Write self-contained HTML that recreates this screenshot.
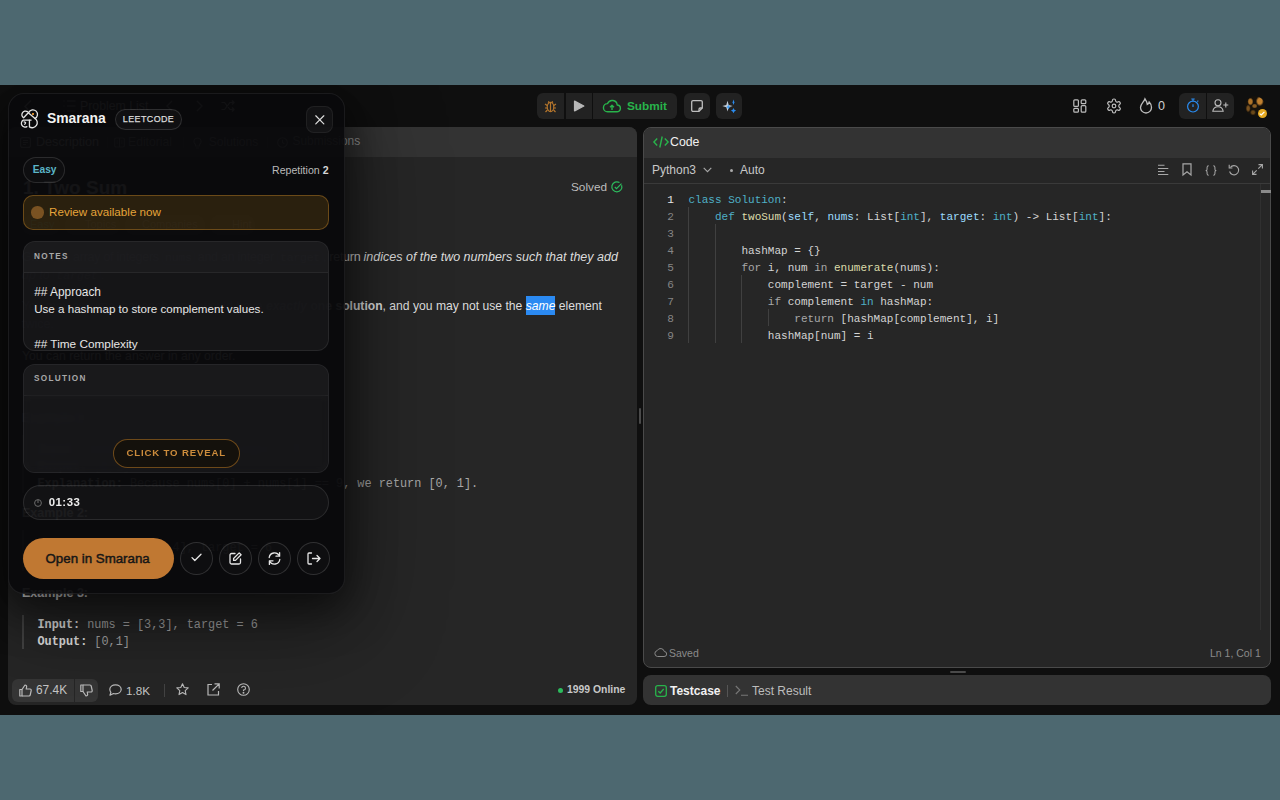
<!DOCTYPE html>
<html><head><meta charset="utf-8">
<style>
*{box-sizing:border-box;margin:0;padding:0}
html,body{width:1280px;height:800px;overflow:hidden}
body{background:#4d6870;font-family:"Liberation Sans",sans-serif;position:relative;color:#eee}
.a{position:absolute}
.mono{font-family:"Liberation Mono",monospace}
#app{position:absolute;left:0;top:85px;width:1280px;height:630px;background:#0f0f0f}
.btn{position:absolute;background:#222;border-radius:6px}
.panel{position:absolute;border-radius:8px;overflow:hidden}
svg{position:absolute;overflow:visible}
.t{position:absolute;white-space:nowrap;line-height:1}
.ic{font-size:11.5px;background:rgba(255,255,255,0.08);border:1px solid rgba(255,255,255,0.1);border-radius:4px;padding:0 2px}
.k{color:#4fb0c6}.f{color:#dcdcaa}.v{color:#9cdcfe}.g{color:#a8a8a8}
</style></head><body>
<div id="root" style="position:absolute;left:0;top:0;width:1280px;height:800px;clip-path:inset(85px 0 85px 0)">
<div id="app"></div>

<!-- ===== TOP BAR ===== -->
<div id="topbar">
  <!-- center group -->
  <div class="btn" style="left:537px;top:93px;width:140px;height:26px"></div>
  <div class="a" style="left:564px;top:93px;width:2px;height:26px;background:#0f0f0f"></div>
  <div class="a" style="left:592px;top:93px;width:1px;height:26px;background:#0f0f0f"></div>
  <!-- bug -->
  <svg style="left:544px;top:99px" width="13" height="14" viewBox="0 0 13 14" fill="none" stroke="#b5762c" stroke-width="1.2">
    <ellipse cx="6.5" cy="8" rx="3.3" ry="4.6"/><path d="M6.5 3.6V12.5M4.2 3.8L5 2.3M8.8 3.8L8 2.3M3.2 6.5L1 5M9.8 6.5L12 5M3.2 9L1 9M9.8 9L12 9M3.4 11L1.5 13M9.6 11L11.5 13"/>
  </svg>
  <!-- play -->
  <svg style="left:573px;top:100px" width="12" height="12" viewBox="0 0 12 12"><path d="M1.6 1.2L10.8 6L1.6 10.8Z" fill="#b8b8b8" stroke="#b8b8b8" stroke-width="1.4" stroke-linejoin="round"/></svg>
  <!-- cloud -->
  <svg style="left:603px;top:99px" width="18" height="14" viewBox="0 0 18 14" fill="none" stroke="#28b44b" stroke-width="1.4" stroke-linejoin="round">
    <path d="M4.5 12.8H13.8A3.4 3.4 0 0 0 14.2 6 5 5 0 0 0 4.6 4.6 4.1 4.1 0 0 0 4.5 12.8Z"/><path d="M9 11V6.3M7 8.2L9 6.2 11 8.2"/>
  </svg>
  <div class="t" style="left:627px;top:100.5px;font-size:11.8px;font-weight:bold;color:#28b44b">Submit</div>
  <!-- note -->
  <div class="btn" style="left:684px;top:93px;width:26px;height:26px"></div>
  <svg style="left:691px;top:100px" width="12" height="12" viewBox="0 0 12 12" fill="none" stroke="#bdbdbd" stroke-width="1.3"><path d="M2 0.7H10A1.3 1.3 0 0 1 11.3 2V8L8 11.3H2A1.3 1.3 0 0 1 0.7 10V2A1.3 1.3 0 0 1 2 0.7Z"/><path d="M11.3 8H9.3A1.3 1.3 0 0 0 8 9.3V11.3"/></svg>
  <!-- ai -->
  <div class="btn" style="left:716px;top:93px;width:26px;height:26px"></div>
  <svg style="left:720px;top:98px" width="16" height="16" viewBox="0 0 16 16">
    <path d="M7.5 2.8L8.7 6.9 12.7 8.1 8.7 9.3 7.5 13.4 6.3 9.3 2.3 8.1 6.3 6.9Z" fill="#c4ccd6"/>
    <path d="M8.3 6.6L9.1 8.3 10.6 9.1 9.1 9.7 8.3 11.6 7.6 9.7 6.2 9.1 7.6 8.3Z" fill="#3d9cf5"/>
    <path d="M13.5 1.5L14.3 4 15 4.3 14.3 4.6 13.5 6.9 12.7 4.6 12 4.3 12.7 4Z" fill="#2a8cf0"/>
    <path d="M13.5 10L14.4 11.8 16.1 12.6 14.4 13.4 13.5 15.2 12.6 13.4 10.9 12.6 12.6 11.8Z" fill="#2a8cf0"/>
  </svg>

  <!-- right icons -->
  <svg style="left:1073px;top:99px" width="14" height="14" viewBox="0 0 14 14" fill="none" stroke="#bdbdbd" stroke-width="1.2">
    <rect x="0.8" y="0.8" width="4.6" height="6.6" rx="1"/><rect x="0.8" y="9.3" width="4.6" height="3.9" rx="1"/><rect x="8.2" y="0.8" width="4.6" height="3.9" rx="1"/><rect x="8.2" y="6.6" width="4.6" height="6.6" rx="1"/>
  </svg>
  <svg style="left:1107px;top:99px" width="14" height="14" viewBox="2 2 20 20" fill="none" stroke="#bdbdbd" stroke-width="1.7"><path d="M12.22 2h-.44a2 2 0 0 0-2 2v.18a2 2 0 0 1-1 1.73l-.43.25a2 2 0 0 1-2 0l-.15-.08a2 2 0 0 0-2.73.73l-.22.38a2 2 0 0 0 .73 2.730l.15.1a2 2 0 0 1 1 1.72v.51a2 2 0 0 1-1 1.74l-.15.09a2 2 0 0 0-.73 2.73l.22.38a2 2 0 0 0 2.73.73l.15-.08a2 2 0 0 1 2 0l.43.25a2 2 0 0 1 1 1.73V20a2 2 0 0 0 2 2h.44a2 2 0 0 0 2-2v-.18a2 2 0 0 1 1-1.73l.43-.25a2 2 0 0 1 2 0l.15.08a2 2 0 0 0 2.73-.73l.22-.39a2 2 0 0 0-.73-2.73l-.15-.08a2 2 0 0 1-1-1.74v-.5a2 2 0 0 1 1-1.74l.15-.09a2 2 0 0 0 .73-2.73l-.22-.38a2 2 0 0 0-2.73-.73l-.15.08a2 2 0 0 1-2 0l-.43-.25a2 2 0 0 1-1-1.73V4a2 2 0 0 0-2-2z"/><circle cx="12" cy="12" r="2.6"/></svg>
  <svg style="left:1139px;top:98px" width="14" height="16" viewBox="0 0 14 16" fill="none" stroke="#bdbdbd" stroke-width="1.3"><path d="M7 15A5.5 5.5 0 0 1 1.5 9.5C1.5 6 5 4 6 0.8 7.5 3 8.3 4.8 8.3 6.5 9.3 6 10 5 10.2 4 11.8 5.5 12.5 7.5 12.5 9.5A5.5 5.5 0 0 1 7 15Z"/></svg>
  <div class="t" style="left:1158px;top:100px;font-size:12.5px;color:#cfcfcf">0</div>
  <div class="btn" style="left:1179px;top:93px;width:55px;height:26px"></div>
  <div class="a" style="left:1206px;top:93px;width:1px;height:26px;background:#0f0f0f"></div>
  <svg style="left:1186px;top:98px" width="14" height="15" viewBox="0 0 14 15" fill="none" stroke="#2a8cf0" stroke-width="1.2"><circle cx="7" cy="8.6" r="5.4"/><path d="M7 6.2V9M5.3 1H8.7M7 1V3.2M11.3 3.6L12.3 2.6"/></svg>
  <svg style="left:1212px;top:99px" width="17" height="13" viewBox="0 0 17 13" fill="none" stroke="#bdbdbd" stroke-width="1.1"><circle cx="6" cy="3.8" r="3"/><path d="M0.8 12.3C1.3 9.2 3.3 7.7 6 7.7S10.7 9.2 11.2 12.3Z"/><path d="M13.8 3.5V8.5M11.3 6H16.3"/></svg>
  <!-- avatar -->
  <div class="a" style="left:1244.5px;top:96px;width:20.5px;height:20px;border-radius:50%;background:radial-gradient(ellipse 3px 4px at 27% 28%,#b07428 55%,transparent 100%),radial-gradient(ellipse 4px 5px at 74% 26%,#c08030 55%,transparent 100%),radial-gradient(ellipse 3px 2.5px at 48% 50%,#8a5c22 50%,transparent 100%),radial-gradient(ellipse 2.5px 4px at 16% 62%,#7a5220 45%,transparent 100%),radial-gradient(ellipse 3px 3px at 40% 82%,#6a4818 45%,transparent 100%),#16110b"></div>
  <div class="a" style="left:1257.7px;top:109.2px;width:9px;height:9px;border-radius:50%;background:#e6aa22"></div><svg style="left:1259.3px;top:111.3px" width="6" height="5" viewBox="0 0 6 5" fill="none" stroke="#fff" stroke-width="1.2"><path d="M0.6 2.6L2.3 4 5.4 0.8"/></svg>
</div>

<!-- ===== LEFT PANEL ===== -->
<div class="panel" style="left:8px;top:127px;width:629px;height:578px;background:#262626">
  <div class="a" style="left:0;top:0;width:629px;height:30px;background:#333"></div>
</div>
<div id="leftc">
  <!-- topbar left (under overlay) -->
  <svg style="left:22px;top:99px" width="14" height="14" viewBox="0 0 14 14" fill="none" stroke="#bdbdbd" stroke-width="1.3"><path d="M9 1.5L3 7.5 6 10.5M4 11.5H12"/></svg>
  <svg style="left:63px;top:100px" width="13" height="12" viewBox="0 0 13 12" fill="none" stroke="#bdbdbd" stroke-width="1.2"><path d="M4 1H12.5M4 6H12.5M4 11H12.5M0.5 1H1.5M0.5 6H1.5M0.5 11H1.5"/></svg>
  <div class="t" style="left:80px;top:100px;font-size:12.3px;color:#c0c0c0">Problem List</div>
  <svg style="left:166px;top:100px" width="7" height="12" viewBox="0 0 7 12" fill="none" stroke="#9a9a9a" stroke-width="1.3"><path d="M6 1L1 6 6 11"/></svg>
  <svg style="left:196px;top:100px" width="7" height="12" viewBox="0 0 7 12" fill="none" stroke="#9a9a9a" stroke-width="1.3"><path d="M1 1L6 6 1 11"/></svg>
  <svg style="left:221px;top:100px" width="14" height="12" viewBox="0 0 14 12" fill="none" stroke="#bdbdbd" stroke-width="1.2"><path d="M0.5 2.5H3.5L9 9.5H13M0.5 9.5H3.5L9 2.5H13M11 0.5L13 2.5 11 4.5M11 7.5L13 9.5 11 11.5"/></svg>
  <!-- tabs -->
  <svg style="left:19.5px;top:137px" width="11" height="11" viewBox="0 0 11 11" fill="none" stroke="#bdbdbd" stroke-width="1.1"><rect x="0.6" y="0.6" width="9.8" height="9.8" rx="2"/><path d="M3 3.5H8M3 5.5H8M3 7.5H6"/></svg>
  <div class="t" style="left:36px;top:136px;font-size:12.6px;color:#e6e6e6">Description</div>
  <div class="a" style="left:106.5px;top:137px;width:1px;height:11px;background:#4a4a4a"></div>
  <svg style="left:114px;top:137px" width="11" height="11" viewBox="0 0 11 11" fill="none" stroke="#9a9a9a" stroke-width="1.1"><rect x="0.6" y="1" width="9.8" height="9" rx="1.5"/><path d="M5.5 1V10M2.5 4H4M2.5 6H4M7 4H8.5M7 6H8.5"/></svg>
  <div class="t" style="left:128px;top:136px;font-size:12.2px;color:#9a9a9a">Editorial</div>
  <div class="a" style="left:182.5px;top:137px;width:1px;height:11px;background:#4a4a4a"></div>
  <svg style="left:192px;top:136.5px" width="11" height="12" viewBox="0 0 11 12" fill="none" stroke="#9a9a9a" stroke-width="1.1"><path d="M5.5 1A3.5 3.5 0 0 1 7.5 7.4V9H3.5V7.4A3.5 3.5 0 0 1 5.5 1ZM4 11H7"/></svg>
  <div class="t" style="left:208.8px;top:136px;font-size:12px;color:#9a9a9a">Solutions</div>
  <div class="a" style="left:267px;top:137px;width:1px;height:11px;background:#4a4a4a"></div>
  <svg style="left:277px;top:137px" width="11" height="11" viewBox="0 0 11 11" fill="none" stroke="#9a9a9a" stroke-width="1.1"><circle cx="5.5" cy="5.5" r="4.8"/><path d="M5.5 2.8V5.5L7.3 6.8"/></svg>
  <div class="t" style="left:292.5px;top:136px;font-size:11.95px;color:#9a9a9a">Submissions</div>
  <!-- title -->
  <div class="t" style="left:23px;top:178px;font-size:19px;font-weight:bold;color:#f0f0f0">1. Two Sum</div>
  <div class="t" style="left:571px;top:182px;font-size:11.8px;color:#bdbdbd">Solved</div>
  <svg style="left:611px;top:181px" width="12" height="12" viewBox="0 0 12 12" fill="none" stroke="#2cbb5d" stroke-width="1.2"><path d="M10.6 4.3A5 5 0 1 1 8.5 1.6"/><path d="M3.8 6L5.5 7.6 10.5 2.6"/></svg>
  <!-- tags -->
  <div class="a" style="left:22px;top:215px;width:38px;height:20px;border-radius:10px;background:#3a3a3a"></div>
  <div class="t" style="left:30px;top:219px;font-size:11px;color:#5cb6c8">Easy</div>
  <div class="a" style="left:65px;top:215px;width:55px;height:20px;border-radius:10px;background:#3a3a3a"></div>
  <div class="t" style="left:85px;top:219px;font-size:11px;color:#9a9a9a">Topics</div>
  <div class="a" style="left:125px;top:215px;width:80px;height:20px;border-radius:10px;background:#3a3a3a"></div>
  <div class="t" style="left:142px;top:219px;font-size:11px;color:#9a9a9a">Companies</div>
  <div class="a" style="left:210px;top:215px;width:45px;height:20px;border-radius:10px;background:#3a3a3a"></div>
  <div class="t" style="left:232px;top:219px;font-size:11px;color:#9a9a9a">Hint</div>
  <!-- paragraphs -->
  <div class="t" id="p1" style="left:22px;top:251px;font-size:12.5px;color:#dcdcdc"><span style="letter-spacing:-0.27px">Given an array of integers <span class="mono ic">nums</span> and an integer <span class="mono ic">target</span>, return </span><i id="p1i">indices of the two numbers such that they add</i></div>
  <div class="t" style="left:22px;top:269px;font-size:12.5px;color:#dcdcdc"><i>up to <span class="mono ic">target</span></i>.</div>
  <div class="t" id="p2" style="left:22px;top:300px;font-size:12.15px;color:#dcdcdc">You may assume that each input would have <b><i>exactly</i> one solution</b>, and you may not use the <span id="same" style="background:#2b8af2;color:#fff;padding:3px 0 2px"><i>same</i></span> element</div>
  <div class="t" style="left:22px;top:318px;font-size:12.5px;color:#dcdcdc">twice.</div>
  <div class="t" style="left:22px;top:350.3px;font-size:12.25px;color:#dcdcdc">You can return the answer in any order.</div>
  <!-- examples -->
  <div class="t" style="left:22px;top:412px;font-size:12.5px;font-weight:bold;color:#f0f0f0">Example 1:</div>
  <div class="a" style="left:22px;top:435px;width:1.5px;height:58px;background:#444"></div>
  <div class="t mono" style="left:37.5px;top:444.5px;font-size:11.85px;color:#a8a8a8"><b style="color:#e6e6e6">Input:</b> nums = [2,7,11,15], target = 9</div>
  <div class="t mono" style="left:37.5px;top:461.5px;font-size:11.85px;color:#a8a8a8"><b style="color:#e6e6e6">Output:</b> [0,1]</div>
  <div class="t mono" style="left:37.5px;top:478.5px;font-size:11.85px;color:#a8a8a8"><b style="color:#e6e6e6">Explanation:</b> Because nums[0] + nums[1] == 9, we return [0, 1].</div>
  <div class="t" style="left:22px;top:507px;font-size:12.5px;font-weight:bold;color:#f0f0f0">Example 2:</div>
  <div class="a" style="left:22px;top:530px;width:1.5px;height:41px;background:#444"></div>
  <div class="t mono" style="left:37.5px;top:542.5px;font-size:11.85px;color:#a8a8a8"><b style="color:#e6e6e6">Input:</b> nums = [3,2,4], target = 6</div>
  <div class="t mono" style="left:37.5px;top:559.5px;font-size:11.85px;color:#a8a8a8"><b style="color:#e6e6e6">Output:</b> [1,2]</div>
  <div class="t" style="left:22px;top:587px;font-size:12.5px;font-weight:bold;color:#f0f0f0">Example 3:</div>
  <div class="a" style="left:22px;top:615px;width:1.5px;height:34px;background:#444"></div>
  <div class="t mono" style="left:37.5px;top:619.5px;font-size:11.85px;color:#a8a8a8"><b style="color:#e6e6e6">Input:</b> nums = [3,3], target = 6</div>
  <div class="t mono" style="left:37.5px;top:636.5px;font-size:11.85px;color:#a8a8a8"><b style="color:#e6e6e6">Output:</b> [0,1]</div>
  <!-- footer -->
  <div class="a" style="left:12px;top:679px;width:86px;height:23px;border-radius:6px;background:#363636"></div>
  <div class="a" style="left:73.5px;top:679px;width:1px;height:23px;background:#262626"></div>
  <svg style="left:19px;top:684px" width="13" height="13" viewBox="0 0 13 13" fill="none" stroke="#bdbdbd" stroke-width="1.2" stroke-linejoin="round"><path d="M0.8 5.5H3V12H0.8Z"/><path d="M3 5.5L6 1C7.2 1 7.8 1.8 7.6 3L7.2 5H11A1.3 1.3 0 0 1 12.2 6.5L11.2 11A1.3 1.3 0 0 1 10 12H3"/></svg>
  <div class="t" style="left:36px;top:685px;font-size:11.9px;color:#c8c8c8">67.4K</div>
  <svg style="left:80px;top:684px" width="13" height="13" viewBox="0 0 13 13" fill="none" stroke="#bdbdbd" stroke-width="1.2" stroke-linejoin="round"><path d="M0.8 7.5H3V1H0.8Z"/><path d="M3 7.5L6 12C7.2 12 7.8 11.2 7.6 10L7.2 8H11A1.3 1.3 0 0 0 12.2 6.5L11.2 2A1.3 1.3 0 0 0 10 1H3"/></svg>
  <svg style="left:109px;top:684px" width="13" height="12" viewBox="0 0 13 12" fill="none" stroke="#bdbdbd" stroke-width="1.2" stroke-linejoin="round"><path d="M6.5 0.8C9.8 0.8 12.2 2.8 12.2 5.3S9.8 9.8 6.5 9.8C5.8 9.8 5.1 9.7 4.5 9.5L1 11.2 1.9 8.3C1.2 7.5 0.8 6.5 0.8 5.3 0.8 2.8 3.2 0.8 6.5 0.8Z"/></svg>
  <div class="t" style="left:126px;top:685px;font-size:11.7px;color:#c8c8c8">1.8K</div>
  <div class="a" style="left:163.5px;top:684px;width:1px;height:13px;background:#444"></div>
  <svg style="left:176px;top:683px" width="13" height="13" viewBox="0 0 13 13" fill="none" stroke="#bdbdbd" stroke-width="1.1" stroke-linejoin="round"><path d="M6.5 0.8L8.2 4.5 12.2 4.9 9.2 7.6 10 11.6 6.5 9.6 3 11.6 3.8 7.6 0.8 4.9 4.8 4.5Z"/></svg>
  <svg style="left:207px;top:683px" width="13" height="13" viewBox="0 0 13 13" fill="none" stroke="#bdbdbd" stroke-width="1.2"><path d="M5 1.5H1V12H11.5V8M7.5 0.8H12.2V5.5M12.2 0.8L5.5 7.5"/></svg>
  <svg style="left:237px;top:683px" width="13" height="13" viewBox="0 0 13 13" fill="none" stroke="#bdbdbd" stroke-width="1.1"><circle cx="6.5" cy="6.5" r="5.8"/><path d="M4.7 5A1.9 1.9 0 1 1 6.5 7V8"/><circle cx="6.5" cy="9.8" r="0.4" fill="#bdbdbd"/></svg>
  <div class="a" style="left:558px;top:688px;width:5px;height:5px;border-radius:50%;background:#2cbb5d"></div>
  <div class="t" style="left:567px;top:685px;font-size:10.4px;font-weight:bold;color:#c8c8c8">1999 Online</div>
</div>

<!-- ===== RIGHT PANEL ===== -->
<div class="panel" style="left:643px;top:127px;width:628px;height:541px;background:#262626;border:1px solid #4a4a4a">
  <div class="a" style="left:0;top:0;width:628px;height:30px;background:#333"></div>
  <div class="a" style="left:0;top:55px;width:628px;height:1px;background:#3a3a3a"></div>
</div>
<div class="panel" style="left:643px;top:675px;width:628px;height:30px;background:#333"></div>


<!-- code panel content -->
<div id="codec">
  <svg style="left:653px;top:136px" width="16" height="12" viewBox="0 0 16 12" fill="none" stroke="#28b44b" stroke-width="1.4"><path d="M4.2 2.5L0.9 6 4.2 9.5M11.8 2.5L15.1 6 11.8 9.5M9.2 0.5L6.8 11.5"/></svg>
  <div class="t" style="left:670px;top:136px;font-size:12.3px;color:#f0f0f0">Code</div>
  <div class="t" style="left:652px;top:164px;font-size:12px;color:#c8c8c8">Python3</div>
  <svg style="left:703px;top:167px" width="9" height="6" viewBox="0 0 9 6" fill="none" stroke="#a8a8a8" stroke-width="1.1"><path d="M0.7 0.8L4.5 4.6 8.3 0.8"/></svg>
  <div class="a" style="left:730px;top:169px;width:3px;height:3px;border-radius:50%;background:#aaa"></div>
  <div class="t" style="left:740px;top:164px;font-size:12px;color:#c8c8c8">Auto</div>
  <!-- toolbar icons -->
  <svg style="left:1158px;top:164px" width="11" height="11" viewBox="0 0 11 11" fill="none" stroke="#a8a8a8" stroke-width="1.1"><path d="M0 1.3H6.5M0 4.5H10.3M0 7.5H6.5M0 10.5H10.3"/></svg>
  <svg style="left:1182px;top:163px" width="10" height="13" viewBox="0 0 10 13" fill="none" stroke="#a8a8a8" stroke-width="1.2"><path d="M1 0.8H9V12L5 8.8 1 12Z"/></svg>
  <svg style="left:1204px;top:165px" width="14" height="11" viewBox="0 0 13 12" fill="none" stroke="#a8a8a8" stroke-width="1.1"><path d="M4 0.7C2.5 0.7 2.2 1.5 2.2 2.7V4.5C2.2 5.3 1.7 6 0.7 6 1.7 6 2.2 6.7 2.2 7.5V9.3C2.2 10.5 2.5 11.3 4 11.3M9 0.7C10.5 0.7 10.8 1.5 10.8 2.7V4.5C10.8 5.3 11.3 6 12.3 6 11.3 6 10.8 6.7 10.8 7.5V9.3C10.8 10.5 10.5 11.3 9 11.3"/></svg>
  <svg style="left:1228px;top:164px" width="12" height="12" viewBox="0 0 12 12" fill="none" stroke="#a8a8a8" stroke-width="1.1"><path d="M2.3 3.5A4.6 4.6 0 1 1 1.6 7.5"/><path d="M1.2 0.8V4H4.4"/></svg>
  <svg style="left:1252px;top:164px" width="11" height="11" viewBox="0 0 11 11" fill="none" stroke="#a8a8a8" stroke-width="1.1"><path d="M6.5 0.6H10.4V4.5M10.4 0.6L6.3 4.7M4.5 10.4H0.6V6.5M0.6 10.4L4.7 6.3"/></svg>
  <!-- scroll -->
  <div class="a" style="left:1260px;top:190px;width:11px;height:2.5px;background:#8a8a8a"></div>
  <div class="a" style="left:1259.5px;top:184px;width:1px;height:446px;background:#303030"></div>
  <!-- line numbers -->
  <div class="a mono" style="left:650px;top:192px;width:24px;text-align:right;font-size:11.1px;line-height:17px;color:#858585">
    <div style="color:#e6e6e6">1</div><div>2</div><div>3</div><div>4</div><div>5</div><div>6</div><div>7</div><div>8</div><div>9</div>
  </div>
  <!-- indent guides -->
  <div class="a" style="left:688px;top:207px;width:1px;height:136px;background:#404040"></div>
  <div class="a" style="left:715px;top:224px;width:1px;height:119px;background:#404040"></div>
  <div class="a" style="left:741px;top:275px;width:1px;height:68px;background:#404040"></div>
  <div class="a" style="left:768px;top:309px;width:1px;height:17px;background:#404040"></div>
  <div class="a mono" style="left:688.5px;top:192px;font-size:11.02px;line-height:17px;color:#d4d4d4;white-space:pre"><div><span class="k">class</span> <span class="k">Solution</span>:</div><div>    <span class="k">def</span> <span class="f">twoSum</span>(<span class="v">self</span>, <span class="v">nums</span>: List[<span class="k">int</span>], <span class="v">target</span>: <span class="k">int</span>) -&gt; List[<span class="k">int</span>]:</div><div> </div><div>        hashMap = {}</div><div>        <span class="g">for</span> i, num <span class="g">in</span> <span class="f">enumerate</span>(nums):</div><div>            complement = target - num</div><div>            <span class="g">if</span> complement <span class="k">in</span> hashMap:</div><div>                <span class="g">return</span> [hashMap[complement], i]</div><div>            hashMap[num] = i</div></div>
  <!-- status -->
  <svg style="left:654px;top:648px" width="13" height="9" viewBox="0 0 13 9" fill="none" stroke="#8a8a8a" stroke-width="1"><path d="M3.5 8.5H10A2.5 2.5 0 0 0 10.3 3.5 3.8 3.8 0 0 0 3.2 2.6 3 3 0 0 0 3.5 8.5Z"/></svg>
  <div class="t" style="left:669px;top:648px;font-size:10.5px;color:#8a8a8a">Saved</div>
  <div class="t" style="left:1210px;top:648px;font-size:10.5px;color:#8a8a8a">Ln 1, Col 1</div>
  <!-- testcase -->
  <svg style="left:655px;top:685px" width="12" height="12" viewBox="0 0 12 12" fill="none" stroke="#28b44b" stroke-width="1.3"><rect x="0.7" y="0.7" width="10.6" height="10.6" rx="2"/><path d="M3.3 6.2L5.2 8 8.7 4"/></svg>
  <div class="t" style="left:670px;top:685px;font-size:12px;font-weight:bold;color:#f0f0f0">Testcase</div>
  <div class="a" style="left:727px;top:685px;width:1px;height:12px;background:#555"></div>
  <svg style="left:735px;top:685px" width="14" height="11" viewBox="0 0 14 11" fill="none" stroke="#777" stroke-width="1.1"><path d="M0.8 1L4.8 5 0.8 9M6 10.3H13"/></svg>
  <div class="t" style="left:752px;top:685px;font-size:12px;color:#bdbdbd">Test Result</div>
  <!-- resize handles -->
  <div class="a" style="left:950px;top:671px;width:16px;height:2px;border-radius:1px;background:#4a4a4a"></div>
  <div class="a" style="left:639px;top:408px;width:2px;height:16px;border-radius:1px;background:#4a4a4a"></div>
</div>

<!-- ===== OVERLAY ===== -->
<div class="a" style="left:8px;top:93px;width:337px;height:501px;border-radius:16px;background:rgba(9,9,11,0.955);border:1px solid rgba(255,255,255,0.07);box-shadow:0 12px 40px 4px rgba(0,0,0,0.55),0 24px 90px 10px rgba(0,0,0,0.35)"></div>


<div id="ovc">
  <!-- logo -->
  <svg style="left:20.2px;top:110.2px" width="18" height="18" viewBox="0 0 18 18" fill="none" stroke="#e4e4e4" stroke-width="1.3" stroke-linecap="round" stroke-linejoin="round">
    <path d="M7.4 1.6A3.6 3.6 0 1 0 3.6 7.8L8.8 2.3"/>
    <path d="M8.8 2.3A4.6 4.6 0 1 1 15 8.5L8.3 2.8"/>
    <path d="M11.1 10.1H3.3A3.7 3.7 0 1 0 6.9 16.6"/>
    <path d="M4.1 11.9Q6.8 12.5 4.7 14.2"/>
    <path d="M9.45 10.1V16.9A4.9 4.9 0 0 0 15 8.5"/>
  </svg>
  <div class="a" style="left:32px;top:112.8px;width:2.2px;height:2.2px;background:#d58a2a"></div>
  <div class="t" style="left:47px;top:112px;font-size:13.9px;font-weight:bold;color:#f2f2f2">Smarana</div>
  <div class="a" style="left:115px;top:108.5px;width:67px;height:21px;border-radius:11px;border:1px solid rgba(255,255,255,0.13);background:rgba(255,255,255,0.03)"></div>
  <div class="t" style="left:122.8px;top:114.6px;font-size:8.9px;letter-spacing:0.45px;color:#dadada;-webkit-text-stroke:0.25px #dadada">LEETCODE</div>
  <div class="a" style="left:305.5px;top:105.5px;width:27.5px;height:27px;border-radius:8px;border:1px solid rgba(255,255,255,0.06);background:rgba(255,255,255,0.04)"></div>
  <svg style="left:314.7px;top:114.5px" width="9.6" height="9.6" viewBox="0 0 10 10" stroke="#dedede" stroke-width="1.25" stroke-linecap="round"><path d="M0.8 0.8L9.2 9.2M9.2 0.8L0.8 9.2"/></svg>

  <!-- easy / repetition -->
  <div class="a" style="left:23px;top:157px;width:42px;height:25.5px;border-radius:13px;border:1px solid rgba(255,255,255,0.12);background:rgba(255,255,255,0.02)"></div>
  <div class="t" style="left:32.7px;top:164.5px;font-size:10.2px;font-weight:bold;color:#5cb6c8">Easy</div>
  <div class="t" style="left:272px;top:164.5px;font-size:10.6px;color:#bababa">Repetition <b style="color:#d6d6d6">2</b></div>

  <!-- review banner -->
  <div class="a" style="left:23px;top:194.5px;width:306px;height:35px;border-radius:10px;border:1px solid rgba(200,135,40,0.42);background:rgba(200,140,30,0.17)"></div>
  <div class="a" style="left:31px;top:206px;width:12.5px;height:12.5px;border-radius:50%;background:#7a5222"></div>
  <div class="t" style="left:49px;top:206.3px;font-size:11.65px;color:#e5a43a">Review available now</div>

  <!-- notes card -->
  <div class="a" style="left:23px;top:241px;width:306px;height:110px;border-radius:12px;border:1px solid rgba(255,255,255,0.08);background:rgba(24,24,27,0.78);overflow:hidden">
    <div class="a" style="left:0;top:0;width:306px;height:31px;background:rgba(255,255,255,0.025);border-bottom:1px solid rgba(255,255,255,0.06)"></div>
  </div>
  <div class="t" style="left:34px;top:252.8px;font-size:8.2px;font-weight:bold;letter-spacing:1.3px;color:#a8a8a8">NOTES</div>
  <div class="a" style="left:24px;top:273px;width:304px;height:77px;overflow:hidden">
    <div class="t" style="left:10.2px;top:13.6px;font-size:11.9px;color:#e6e6e6">## Approach</div>
    <div class="t" style="left:10.2px;top:29.8px;font-size:11.6px;color:#e6e6e6">Use a hashmap to store complement values.</div>
    <div class="t" style="left:10.2px;top:65.5px;font-size:11.8px;color:#e6e6e6">## Time Complexity</div>
  </div>

  <!-- solution card -->
  <div class="a" style="left:23px;top:363.5px;width:306px;height:109.5px;border-radius:12px;border:1px solid rgba(255,255,255,0.08);background:rgba(24,24,27,0.7);overflow:hidden">
    <div class="a" style="left:0;top:0;width:306px;height:31px;background:rgba(255,255,255,0.025);border-bottom:1px solid rgba(255,255,255,0.06)"></div>
  </div>
  <div class="a" style="left:24px;top:395px;width:304px;height:77px;border-radius:0 0 11px 11px;backdrop-filter:blur(3px);-webkit-backdrop-filter:blur(3px);background:rgba(255,255,255,0.01)"></div>
  <div class="t" style="left:34px;top:375px;font-size:8.2px;font-weight:bold;letter-spacing:1.3px;color:#a8a8a8">SOLUTION</div>
  <div class="a" style="left:112.5px;top:439px;width:127px;height:28.5px;border-radius:15px;border:1px solid rgba(200,130,40,0.5);background:rgba(20,16,10,0.85)"></div>
  <div class="t" style="left:126.5px;top:448.4px;font-size:9.6px;font-weight:bold;letter-spacing:0.85px;color:#cc8c3c">CLICK TO REVEAL</div>

  <!-- timer -->
  <div class="a" style="left:23px;top:485px;width:306px;height:34.5px;border-radius:18px;border:1px solid rgba(255,255,255,0.1);background:rgba(255,255,255,0.035)"></div>
  <svg style="left:34px;top:498.5px" width="8" height="8" viewBox="0 0 8 8" fill="none" stroke="#6a6a6a" stroke-width="1"><circle cx="4" cy="4" r="3.4"/><path d="M4 0.8V4"/></svg>
  <div class="t" style="left:48.7px;top:496.8px;font-size:11.4px;font-weight:bold;letter-spacing:0.5px;color:#ececec">01:33</div>

  <!-- actions -->
  <div class="a" style="left:23px;top:538px;width:151px;height:40.5px;border-radius:21px;background:#c07832"></div>
  <div class="t" style="left:45.5px;top:552.4px;font-size:13.3px;color:#161616;-webkit-text-stroke:0.45px #161616">Open in Smarana</div>
  <div class="a" style="left:180px;top:542px;width:33px;height:33px;border-radius:50%;border:1px solid rgba(255,255,255,0.14);background:rgba(255,255,255,0.02)"></div>
  <div class="a" style="left:219px;top:542px;width:33px;height:33px;border-radius:50%;border:1px solid rgba(255,255,255,0.14);background:rgba(255,255,255,0.02)"></div>
  <div class="a" style="left:258px;top:542px;width:33px;height:33px;border-radius:50%;border:1px solid rgba(255,255,255,0.14);background:rgba(255,255,255,0.02)"></div>
  <div class="a" style="left:297px;top:542px;width:33px;height:33px;border-radius:50%;border:1px solid rgba(255,255,255,0.14);background:rgba(255,255,255,0.02)"></div>
  <svg style="left:191px;top:553px" width="11" height="9" viewBox="0 0 11 9" fill="none" stroke="#e6e6e6" stroke-width="1.3" stroke-linecap="round" stroke-linejoin="round"><path d="M1 4.6L3.8 7.5 10 1.2"/></svg>
  <svg style="left:229px;top:552px" width="13" height="13" viewBox="0 0 13 13" fill="none" stroke="#e6e6e6" stroke-width="1.3" stroke-linecap="round" stroke-linejoin="round"><path d="M6 1.5H2.5A1.5 1.5 0 0 0 1 3V10.5A1.5 1.5 0 0 0 2.5 12H10A1.5 1.5 0 0 0 11.5 10.5V7"/><path d="M10.2 0.9L12.1 2.8 6.5 8.4H4.6V6.5Z"/></svg>
  <svg style="left:267px;top:551px" width="15" height="15" viewBox="0 0 15 15" fill="none" stroke="#e6e6e6" stroke-width="1.3" stroke-linecap="round" stroke-linejoin="round"><path d="M2.2 6.5A5.4 5.4 0 0 1 12.3 4.8M12.8 8.5A5.4 5.4 0 0 1 2.7 10.2"/><path d="M12.6 1.6V5.2H9M2.4 13.4V9.8H6"/></svg>
  <svg style="left:306.5px;top:552px" width="14" height="13" viewBox="0 0 14 13" fill="none" stroke="#e6e6e6" stroke-width="1.3" stroke-linecap="round" stroke-linejoin="round"><path d="M4.5 1H2A1 1 0 0 0 1 2V11A1 1 0 0 0 2 12H4.5"/><path d="M5.5 6.5H13M10 3.5L13 6.5 10 9.5"/></svg>
</div>
</div>
</body></html>
